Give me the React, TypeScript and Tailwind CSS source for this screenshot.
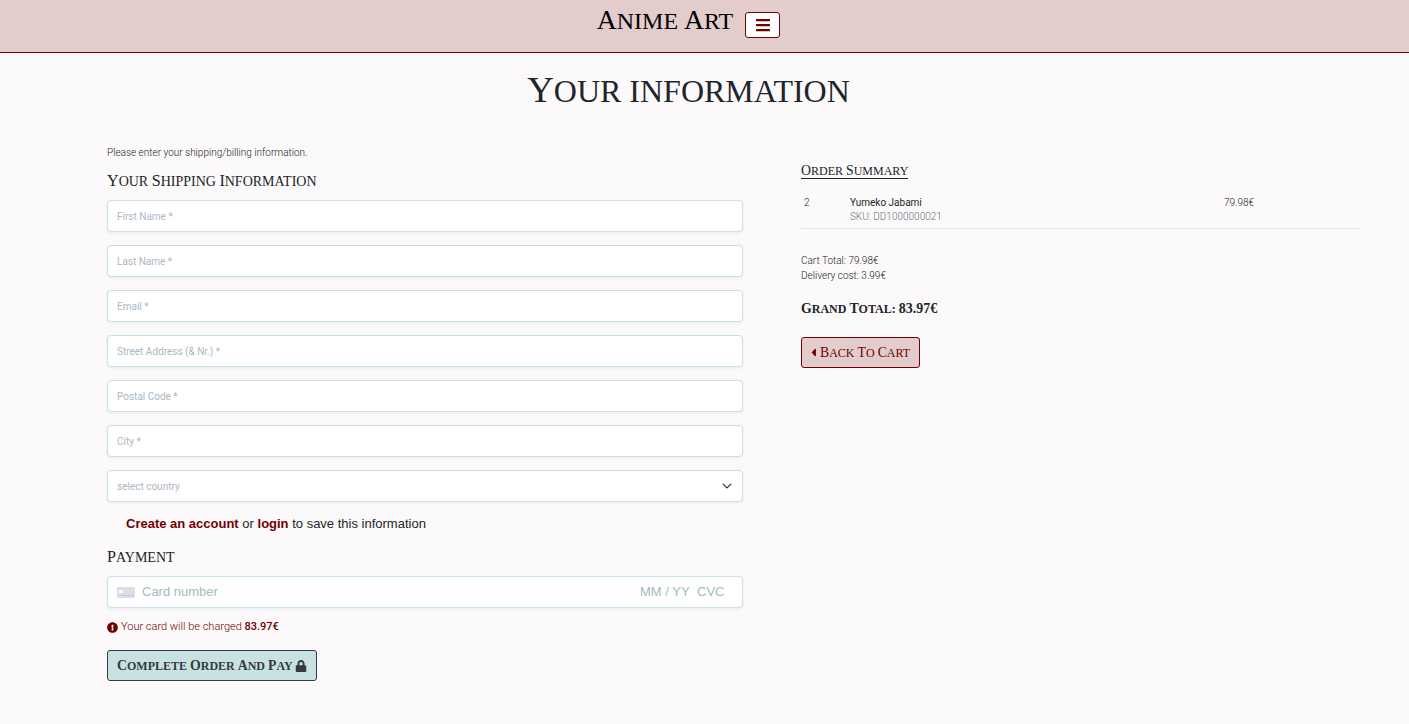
import React from "react";
import { FaBars, FaCaretLeft, FaExclamationCircle, FaLock } from "react-icons/fa";

const display = "font-['Liberation_Serif',serif] uppercase";
const field =
  "h-8 w-full rounded border border-[#c7e2e0] bg-white shadow-[0_1px_3px_0_#e6ebf1] outline-none";

const fields = [
  { id: "first-name", label: "First Name *", type: "text" },
  { id: "last-name", label: "Last Name *", type: "text" },
  { id: "email", label: "Email *", type: "email" },
  { id: "street", label: "Street Address (& Nr.) *", type: "text" },
  { id: "postal-code", label: "Postal Code *", type: "text" },
  { id: "city", label: "City *", type: "text" },
];

/* Sets text in capitals, with a taller first letter on each capitalised word. */
function Caps({ text, underline = false }: { text: string; underline?: boolean }) {
  return (
    <span className={underline ? "border-b border-[#212529]" : ""}>
      {text.split(" ").map((word, i) => (
        <React.Fragment key={i}>
          {i > 0 && " "}
          <span
            className={
              /^[A-Z]/.test(word)
                ? "inline-block first-letter:text-[1.15em] first-letter:leading-none"
                : "inline-block"
            }
          >
            {word}
          </span>
        </React.Fragment>
      ))}
    </span>
  );
}

function CardIcon() {
  return (
    <svg viewBox="0 0 18 11" className="h-[11px] w-[18px] shrink-0" aria-hidden="true">
      <rect width="18" height="11" rx="1" fill="#dcdde8" />
      <rect x="2" y="3" width="4" height="3" rx="0.5" fill="#fff" />
      <path d="M2 8.5h3M6 8.5h3M10 8.5h3M14 8.5h2" stroke="#c3c6d8" strokeWidth="1.2" />
    </svg>
  );
}

function Header() {
  return (
    <header className="border-b border-[#720000] bg-[#e3cccc] pr-8">
      <div className="flex h-[52px] items-start justify-center gap-3">
        <a href="#" className={`${display} pt-[3px] text-[24px] leading-9 font-normal text-black`}>
          <Caps text="Anime Art" />
        </a>
        <button
          type="button"
          aria-label="Menu"
          className="mt-3 flex h-[26px] w-[35px] items-center justify-center rounded-[3px] border border-[#720000] bg-white pb-px text-[#720000]"
        >
          <FaBars size={16} />
        </button>
      </div>
    </header>
  );
}

function ShippingForm() {
  return (
    <form className="flex flex-col items-start" onSubmit={(e) => e.preventDefault()}>
      <p className="text-[10px] leading-4">Please enter your shipping/billing information.</p>
      <h2 className={`${display} mt-[11px] text-[14px] leading-5 font-normal text-[#212529]`}>
        <Caps text="Your Shipping Information" />
      </h2>
      <div className="mt-2 flex w-full flex-col gap-[13px]">
        {fields.map((f) => (
          <input
            key={f.id}
            id={f.id}
            type={f.type}
            aria-label={f.label}
            placeholder={f.label}
            className={`${field} px-[9px] text-[10px] font-normal text-[#212529] placeholder:text-[#aab7c4]`}
          />
        ))}
        <div className="grid items-center">
          <select
            id="country"
            aria-label="Country"
            defaultValue=""
            className={`${field} col-start-1 row-start-1 appearance-none px-[9px] text-[10px] font-normal text-[#aab7c4]`}
          >
            <option value="">select country</option>
            <option value="de">Germany</option>
            <option value="ie">Ireland</option>
          </select>
          <svg
            viewBox="0 0 16 16"
            className="pointer-events-none col-start-1 row-start-1 mr-[11px] h-[10px] w-[10px] justify-self-end"
            fill="none"
            stroke="#343a40"
            strokeWidth="2.2"
            strokeLinecap="round"
            strokeLinejoin="round"
            aria-hidden="true"
          >
            <path d="m2 5 6 6 6-6" />
          </svg>
        </div>
      </div>
      <p className="mt-3 pl-[19px] font-['Liberation_Sans',sans-serif] text-[13px] leading-5 font-normal text-[#212529]">
        <a href="#" className="font-bold text-[#720000]">
          Create an account
        </a>{" "}
        or{" "}
        <a href="#" className="font-bold text-[#720000]">
          login
        </a>{" "}
        to save this information
      </p>
      <h2 className={`${display} mt-[14px] text-[14px] leading-5 font-normal text-[#212529]`}>
        <Caps text="Payment" />
      </h2>
      <div
        className={`${field} mt-2 flex items-center px-[9px] font-['Liberation_Sans',sans-serif] text-[13px] font-normal text-[#212529]`}
      >
        <CardIcon />
        <input
          aria-label="Card number"
          placeholder="Card number"
          className="ml-[7px] min-w-0 grow outline-none placeholder:text-[#aab7c4]"
        />
        <input
          aria-label="Expiry date"
          placeholder="MM / YY"
          className="w-[57px] outline-none placeholder:text-[#aab7c4]"
        />
        <input
          aria-label="CVC"
          placeholder="CVC"
          className="w-9 outline-none placeholder:text-[#aab7c4]"
        />
      </div>
      <p className="mt-[11px] flex items-center gap-[3px] text-[11px] leading-4 text-[#720000]">
        <FaExclamationCircle size={11} />
        <span>
          Your card will be charged <strong className="font-medium">83.97€</strong>
        </span>
      </p>
      <button
        type="submit"
        className={`${display} mt-[15px] flex h-[31px] items-center gap-[2px] rounded-[3px] border border-[#343a40] bg-[#c7e2e0] px-[9px] text-[12px] font-bold text-[#343a40]`}
      >
        <Caps text="Complete Order And Pay" />
        <FaLock size={12} />
      </button>
    </form>
  );
}

function OrderSummary() {
  return (
    <section className="flex flex-col items-start pt-4">
      <h2 className={`${display} text-[12px] leading-5 font-normal text-[#212529]`}>
        <Caps text="Order Summary" underline />
      </h2>
      <table className="mt-3 w-full table-fixed border-b border-[#d9e5e8] text-left text-[10px] leading-[14px]">
        <colgroup>
          <col className="w-[8.2%]" />
          <col className="w-[66.8%]" />
          <col />
        </colgroup>
        <tbody>
          <tr className="align-top">
            <td className="px-[3px] pt-[3px] pb-1">2</td>
            <td className="px-[3px] pt-[3px] pb-1">
              <p className="font-normal text-[#212529]">Yumeko Jabami</p>
              <p className="text-[#6c757d]">SKU: DD1000000021</p>
            </td>
            <td className="px-[3px] pt-[3px] pb-1">79.98€</td>
          </tr>
        </tbody>
      </table>
      <div className="mt-6 text-[10px] leading-[15px]">
        <p>Cart Total: 79.98€</p>
        <p>Delivery cost: 3.99€</p>
      </div>
      <p className={`${display} mt-4 text-[12px] leading-5 font-bold text-[#212529]`}>
        <Caps text="Grand Total:" /> <span className="text-[14px]">83.97€</span>
      </p>
      <a
        href="#"
        className={`${display} mt-[18px] flex h-[31px] items-center rounded-[3px] border border-[#720000] bg-[#e3cccc] px-[9px] text-[12px] font-normal text-[#720000]`}
      >
        <FaCaretLeft size={13} className="-ml-1" />
        <Caps text="Back To Cart" />
      </a>
    </section>
  );
}

export default function App() {
  return (
    <div className="min-h-screen bg-[#fbf9fa] font-['Roboto',sans-serif] font-light text-[#212529]">
      <Header />
      <main>
        <h1
          className={`${display} pt-4 pr-8 text-center text-[32px] leading-[44px] font-normal text-[#212529]`}
        >
          <Caps text="Your information" />
        </h1>
        <div className="mt-8 grid grid-cols-[636fr_560fr] gap-[58px] pr-12 pb-10 pl-[107px]">
          <ShippingForm />
          <OrderSummary />
        </div>
      </main>
    </div>
  );
}
